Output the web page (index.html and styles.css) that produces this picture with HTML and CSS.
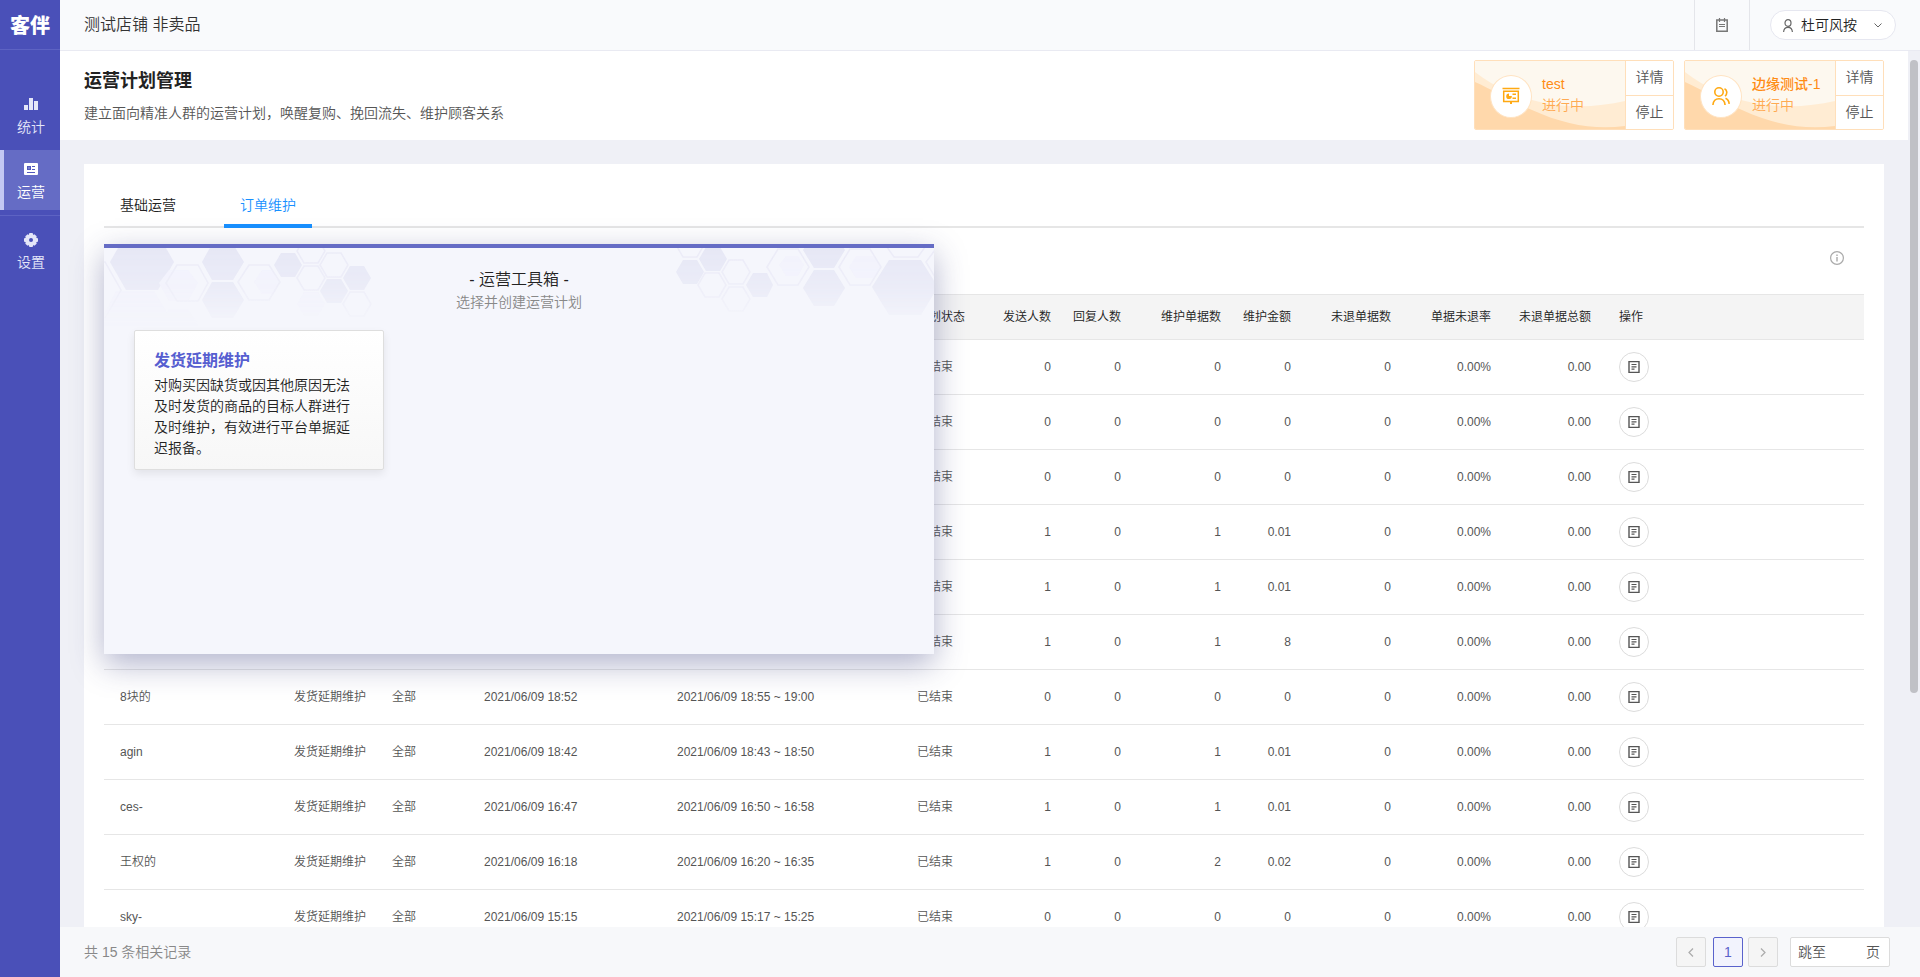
FILE: index.html
```html
<!DOCTYPE html>
<html lang="zh-CN">
<head>
<meta charset="utf-8">
<title>运营计划管理</title>
<link rel="stylesheet" href="styles.css">
</head>
<body>
<svg class="sprite" aria-hidden="true">
  <symbol id="doc" viewBox="0 0 12 12"><path d="M1 .5h10v11H1z" fill="none" stroke="currentColor" stroke-width="1.4"/><path d="M3.5 3.5h5M3.5 5.8h5M3.5 8.2h3" stroke="currentColor" stroke-width="1.2"/></symbol>
  <symbol id="waves" viewBox="0 0 150 68" preserveAspectRatio="none"><path d="M0 11C10 19 22 26 36 32C75 48 115 48 150 40V68H0z" fill="#ffecd3"/><path d="M0 21C18 29 38 41 57 49C90 64 120 69 150 65V68H0z" fill="#ffd8ab"/></symbol>
</svg>
<div class="app">
  <aside class="sidebar">
    <div class="logo">客伴</div>
    <nav class="menu">
      <a class="menu-item" href="#"><svg width="14" height="12" viewBox="0 0 14 12"><path d="M0 7h4v5H0zM5 0h4v12H5zM10 3h4v9h-4z" fill="currentColor"/></svg><span>统计</span></a>
      <a class="menu-item active" href="#"><svg width="14" height="12" viewBox="0 0 14 12"><rect width="14" height="12" rx="1" fill="#fff"/><path d="M3 3h4v4H3zM8 3h3v1H8zM8 6h3v1H8zM3 9h8v1H3z" fill="#5158bd"/><path d="M4.5 4.5h1v1h-1z" fill="#fff"/></svg><span>运营</span></a>
      <a class="menu-item last" href="#"><svg width="14" height="14" viewBox="-7 -7 14 14"><g fill="currentColor"><circle r="5.8"/><rect x="-2" y="-7" width="4" height="14" rx="1"/><rect x="-7" y="-2" width="14" height="4" rx="1"/><rect x="-2" y="-6.6" width="4" height="13.2" rx="1" transform="rotate(45)"/><rect x="-2" y="-6.6" width="4" height="13.2" rx="1" transform="rotate(-45)"/></g><circle r="2" fill="#4a50b8"/></svg><span>设置</span></a>
    </nav>
  </aside>
  <div class="main">
    <header class="topbar">
      <div class="shop">测试店铺 非卖品</div>
      <button class="notes" aria-label="记录"><svg width="12" height="14" viewBox="0 0 12 14"><path d="M.8 2h10.4v11.200H.8z" fill="none" stroke="currentColor" stroke-width="1.500"/><path d="M3.500 0v4M8.500 0v4M3 6.500h6M3 8.500h6" stroke="currentColor" stroke-width="1.200"/></svg></button>
      <div class="account"><button class="user"><svg width="10" height="13" viewBox="0 0 10 13"><g fill="none" stroke="#666" stroke-width="1.2"><ellipse cx="5" cy="4" rx="3" ry="3.3"/><path d="M.6 13c.2-3 1.8-4.6 4.4-4.6S9.200 10 9.400 13"/></g></svg><span>杜可风按</span><svg class="caret" width="8" height="5" viewBox="0 0 8 5"><path d="M.5.5L4 4L7.500.5" fill="none" stroke="#666"/></svg></button></div>
    </header>
    <div class="body">
      <div class="content">
        <section class="page-head">
          <div class="page-title"><h1>运营计划管理</h1><p>建立面向精准人群的运营计划，唤醒复购、挽回流失、维护顾客关系</p></div>
          <div class="plans">
            <article class="plan">
              <div class="plan-info"><svg class="waves"><use href="#waves"/></svg><span class="plan-icon"><svg width="18" height="18" viewBox="0 0 18 18"><g fill="none" stroke="#ffa912" stroke-width="1.5"><path d="M.5 1.500h17"/><path d="M1.700 4.200h14.600v10.300H1.700z"/></g><path d="M8 14.500h2V17H8zM10.500 6.500H14V8h-3.500zM10.500 10.500H14V12h-3.500zM7 6.500v2.500h2.800A2.800 2.800 0 1 1 7 6.500z" fill="#ffa912"/></svg></span><div class="plan-text"><strong>test</strong><span>进行中</span></div></div>
              <div class="plan-actions"><button>详情</button><button>停止</button></div>
            </article>
            <article class="plan">
              <div class="plan-info"><svg class="waves"><use href="#waves"/></svg><span class="plan-icon"><svg width="18" height="18" viewBox="0 0 18 18"><g fill="none" stroke="#ffa912" stroke-width="1.600"><circle cx="7" cy="5" r="4.200"/><path d="M.9 18c.4-4 2.600-6.200 6.100-6.200s5.700 2.200 6.100 6.200M12.500 1.800c2.600 1.200 3.200 4.600.6 7.400M13.500 11.300c2.200.9 3.400 2.800 3.700 5.500"/></g></svg></span><div class="plan-text"><strong>边缘测试-1</strong><span>进行中</span></div></div>
              <div class="plan-actions"><button>详情</button><button>停止</button></div>
            </article>
          </div>
        </section>
        <section class="panel">
          <div class="tabs"><button class="tab">基础运营</button><button class="tab active">订单维护</button></div>
          <div class="tools"><button class="info" aria-label="说明"><svg width="14" height="14" viewBox="0 0 14 14"><circle cx="7" cy="7" r="6.400" fill="none" stroke="#aaa" stroke-width="1.200"/><path d="M7 3.500v1.500M7 6v4.500" stroke="#aaa" stroke-width="1.400"/></svg></button></div>
          <table class="grid">
            <colgroup><col class="c-name"><col class="c-type"><col class="c-scope"><col class="c-date"><col class="c-period"><col class="c-status"><col class="c-send"><col class="c-reply"><col class="c-orders"><col class="c-reply"><col class="c-orders"><col class="c-orders"><col class="c-orders"><col></colgroup>
            <thead><tr><th></th><th></th><th></th><th></th><th></th><th>计划状态</th><th>发送人数</th><th>回复人数</th><th>维护单据数</th><th>维护金额</th><th>未退单据数</th><th>单据未退率</th><th>未退单据总额</th><th>操作</th></tr></thead>
            <tbody>
              <tr><td></td><td></td><td></td><td></td><td></td><td>已结束</td><td>0</td><td>0</td><td>0</td><td>0</td><td>0</td><td>0.00%</td><td>0.00</td><td><button class="op" aria-label="明细"><svg><use href="#doc"/></svg></button></td></tr>
              <tr><td></td><td></td><td></td><td></td><td></td><td>已结束</td><td>0</td><td>0</td><td>0</td><td>0</td><td>0</td><td>0.00%</td><td>0.00</td><td><button class="op" aria-label="明细"><svg><use href="#doc"/></svg></button></td></tr>
              <tr><td></td><td></td><td></td><td></td><td></td><td>已结束</td><td>0</td><td>0</td><td>0</td><td>0</td><td>0</td><td>0.00%</td><td>0.00</td><td><button class="op" aria-label="明细"><svg><use href="#doc"/></svg></button></td></tr>
              <tr><td></td><td></td><td></td><td></td><td></td><td>已结束</td><td>1</td><td>0</td><td>1</td><td>0.01</td><td>0</td><td>0.00%</td><td>0.00</td><td><button class="op" aria-label="明细"><svg><use href="#doc"/></svg></button></td></tr>
              <tr><td></td><td></td><td></td><td></td><td></td><td>已结束</td><td>1</td><td>0</td><td>1</td><td>0.01</td><td>0</td><td>0.00%</td><td>0.00</td><td><button class="op" aria-label="明细"><svg><use href="#doc"/></svg></button></td></tr>
              <tr><td></td><td></td><td></td><td></td><td></td><td>已结束</td><td>1</td><td>0</td><td>1</td><td>8</td><td>0</td><td>0.00%</td><td>0.00</td><td><button class="op" aria-label="明细"><svg><use href="#doc"/></svg></button></td></tr>
              <tr><td>8块的</td><td>发货延期维护</td><td>全部</td><td>2021/06/09 18:52</td><td>2021/06/09 18:55 ~ 19:00</td><td>已结束</td><td>0</td><td>0</td><td>0</td><td>0</td><td>0</td><td>0.00%</td><td>0.00</td><td><button class="op" aria-label="明细"><svg><use href="#doc"/></svg></button></td></tr>
              <tr><td>agin</td><td>发货延期维护</td><td>全部</td><td>2021/06/09 18:42</td><td>2021/06/09 18:43 ~ 18:50</td><td>已结束</td><td>1</td><td>0</td><td>1</td><td>0.01</td><td>0</td><td>0.00%</td><td>0.00</td><td><button class="op" aria-label="明细"><svg><use href="#doc"/></svg></button></td></tr>
              <tr><td>ces-</td><td>发货延期维护</td><td>全部</td><td>2021/06/09 16:47</td><td>2021/06/09 16:50 ~ 16:58</td><td>已结束</td><td>1</td><td>0</td><td>1</td><td>0.01</td><td>0</td><td>0.00%</td><td>0.00</td><td><button class="op" aria-label="明细"><svg><use href="#doc"/></svg></button></td></tr>
              <tr><td>王权的</td><td>发货延期维护</td><td>全部</td><td>2021/06/09 16:18</td><td>2021/06/09 16:20 ~ 16:35</td><td>已结束</td><td>1</td><td>0</td><td>2</td><td>0.02</td><td>0</td><td>0.00%</td><td>0.00</td><td><button class="op" aria-label="明细"><svg><use href="#doc"/></svg></button></td></tr>
              <tr><td>sky-</td><td>发货延期维护</td><td>全部</td><td>2021/06/09 15:15</td><td>2021/06/09 15:17 ~ 15:25</td><td>已结束</td><td>0</td><td>0</td><td>0</td><td>0</td><td>0</td><td>0.00%</td><td>0.00</td><td><button class="op" aria-label="明细"><svg><use href="#doc"/></svg></button></td></tr>
            </tbody>
          </table>
          <div class="toolbox">
            <svg class="hexes" viewBox="0 0 830 80">
              <defs><linearGradient id="fade" gradientUnits="userSpaceOnUse" x1="0" y1="0" x2="0" y2="80"><stop offset="0" stop-color="#fff"/><stop offset=".5" stop-color="#aaa"/><stop offset="1" stop-color="#000"/></linearGradient><mask id="m" maskUnits="userSpaceOnUse" x="0" y="0" width="830" height="80"><rect width="830" height="80" fill="url(#fade)"/></mask></defs>
              <g mask="url(#m)">
                <g fill="#e6e7f5">
                  <path d="M6 14L22-14H54L70 14L54 42H22z"/>
                  <path d="M98 14L108-4H129L140 14L129 32H108zM98 52L108 34H129L140 52L129 70H108z"/>
                  <path d="M170 17L177 5H191L198 17L191 29H177zM239 30L246 18H260L267 30L260 42H246zM216 43L223 31H237L244 43L237 55H223z"/>
                  <path d="M595 11L602-1H616L623 11L616 23H602zM572 24L579 12H593L600 24L593 36H579zM642 37L649 25H663L669 37L663 49H649z"/>
                  <path d="M699 2L710-16H730L741 2L730 20H710zM699 40L710 22H730L741 40L730 58H710zM768 39L785 12H817L834 39L817 67H785z"/>
                </g>
                <g fill="#f2f2fc">
                  <path d="M0 66L12 43H50L64 66L50 90H0zM55 35L65 22H84L94 35L84 53H65zM55 78L65 61H84L95 78L84 95H65zM193 56L200 44H214L221 56L214 68H200zM150 34L158 22H168L176 34L168 46H158zM745 19L752 8H770L778 19L770 30H752zM675 17L682 8H694L700 17L694 28H682z"/>
                </g>
                <g fill="none" stroke="#ebebf7" stroke-width="1.500">
                  <path d="M-30 14H1L17 42L1 70M62 35L73 17H94L104 35L94 53H73zM134 34L145 17H165L176 34L165 52H145z"/>
                  <path d="M193 3L200-9H214L221 3L214 15H200zM216 17L223 5H237L244 17L237 29H223zM193 30L200 18H214L221 30L214 42H200zM239 56L246 44H260L267 56L260 68H246z"/>
                  <path d="M572-3L579-15H593L600-3L593 9H579zM618 24L625 12H639L646 24L639 36H625zM594 37L601 25H615L622 37L615 49H601zM618 51L625 39H639L646 51L639 63H625z"/>
                  <path d="M663 19L674 1H694L705 19L694 37H674zM735 19L746 1H766L777 19L766 37H746zM778-8L790 9H814L826-8M834 -2L822 14L834 34"/>
                </g>
              </g>
            </svg>
            <div class="toolbox-head"><h2>- 运营工具箱 -</h2><p>选择并创建运营计划</p></div>
            <a class="tool-card" href="#"><h3>发货延期维护</h3><p>对购买因缺货或因其他原因无法及时发货的商品的目标人群进行及时维护，有效进行平台单据延迟报备。</p></a>
          </div>
        </section>
      </div>
      <div class="scrollbar"><div class="thumb"></div></div>
    </div>
    <footer class="footer">
      <div class="total">共 15 条相关记录</div>
      <div class="pager">
        <button class="page" aria-label="上一页"><svg width="6" height="9" viewBox="0 0 6 9"><path d="M5 .5L1 4.500L5 8.500" fill="none" stroke="#aaa" stroke-width="1.200"/></svg></button>
        <button class="page current">1</button>
        <button class="page next" aria-label="下一页"><svg width="6" height="9" viewBox="0 0 6 9"><path d="M1 .5L5 4.500L1 8.500" fill="none" stroke="#aaa" stroke-width="1.200"/></svg></button>
        <label class="jump"><span>跳至</span><input type="text"><span>页</span></label>
      </div>
    </footer>
  </div>
</div>
</body>
</html>
```
FILE: styles.css
```css
* { box-sizing: border-box; }
body, h1, h2, h3, p { margin: 0; }
body {
  font: 350 14px/21px "Liberation Sans", "Noto Sans CJK SC", sans-serif;
  color: #222;
}
button, input { font: inherit; color: inherit; margin: 0; padding: 0; border: 0; background: none; }
button { cursor: pointer; }
a { color: inherit; text-decoration: none; }
svg { display: block; flex: none; }
.sprite { position: absolute; width: 0; height: 0; }

.app { display: flex; height: 100vh; overflow: hidden; }
.sidebar { flex: none; width: 60px; background: #4a50b8; color: #e4e6f8; }
.logo {
  display: flex; align-items: center; justify-content: center;
  height: 50px; padding-top: 3px; border-bottom: 1px solid #5d63c3;
  color: #fff; font-size: 20px; font-weight: 900;
}
.menu { padding-top: 40px; }
.menu-item {
  display: flex; flex-direction: column; align-items: center; gap: 7px;
  height: 60px; padding: 8px 0 0 2px;
}
.menu-item.active { padding: 13px 2px 0 0; border-left: 4px solid #c3c8f3; background: #656cc5; color: #fff; }
.menu-item.last { height: 80px; margin-top: 5px; padding-top: 17px; border-top: 1px solid #5d63c3; gap: 5px; }

.main { flex: 1; min-width: 0; display: flex; flex-direction: column; }
.topbar { flex: none; display: flex; height: 51px; background: #f9fafc; border-bottom: 1px solid #e9eaf2; }
.shop { flex: 1; padding-left: 24px; font-size: 16px; line-height: 50px; color: #333; }
.notes { display: flex; align-items: center; justify-content: center; width: 56px; border: solid #e4e5ea; border-width: 0 1px; color: #777; }
.account { display: flex; align-items: center; padding: 0 24px 0 20px; }
.user { display: flex; align-items: center; gap: 8px; width: 126px; height: 30px; padding: 0 13px 0 12px; border: 1px solid #e6e7f0; border-radius: 15px; background: #fff; }
.caret { margin-left: auto; }

.body { flex: 1; min-height: 0; display: flex; background: #eff0f6; }
.content { flex: 1; min-width: 0; overflow: hidden; }
.scrollbar { flex: none; width: 12px; padding: 9px 2px 0; }
.thumb { height: 73%; border-radius: 4px; background: #c0c1c6; }

.page-head { display: flex; justify-content: space-between; padding: 9px 24px 10px; background: #fff; }
.page-title { padding-top: 8px; }
.page-title h1 { font-size: 18px; line-height: 27px; }
.page-title p { margin-top: 8px; color: #555; }
.plans { display: flex; gap: 10px; }
.plan { display: flex; width: 200px; height: 70px; border: 1px solid #ffdfba; border-radius: 2px; overflow: hidden; }
.plan-info { position: relative; flex: 1; display: flex; align-items: center; gap: 10px; padding-left: 15px; background: #fdf8ef; }
.waves { position: absolute; left: 0; top: 0; width: 100%; height: 100%; }
.plan-icon { position: relative; display: flex; align-items: center; justify-content: center; width: 42px; height: 43px; margin-top: 2px; border: 1px solid #ffe3c2; border-radius: 50%; background: #fff; }
.plan-text { position: relative; display: flex; flex-direction: column; color: #ffaa52; white-space: nowrap; }
.plan-text strong { font-weight: 500; color: #ff8c14; }
.plan-actions { display: flex; flex-direction: column; width: 48px; border-left: 1px solid #ffdfba; color: #555; }
.plan-actions button { flex: 1; background: #fff; }
.plan-actions button + button { border-top: 1px solid #ffdfba; }

.panel { position: relative; margin: 24px 24px 0; padding: 20px 20px 0; background: #fff; }
.tabs { display: flex; gap: 32px; height: 44px; border-bottom: 2px solid #e6e6e6; }
.tab { height: 44px; padding: 3px 16px 0; border-bottom: 4px solid transparent; }
.tab.active { border-color: #1890ff; color: #1890ff; }
.tools { display: flex; justify-content: flex-end; align-items: center; height: 66px; padding: 0 20px 6px 0; }

.grid { width: 100%; table-layout: fixed; border-collapse: collapse; font-size: 12px; line-height: 18px; color: #555; }
.grid th, .grid td { padding: 0 10px; text-align: left; font-weight: inherit; white-space: nowrap; border-bottom: 1px solid #e6e6e6; }
.grid th { height: 45px; border-top: 1px solid #e6e6e6; background: #f4f4f4; color: #222; }
.grid td { height: 55px; }
.grid :is(th, td):first-child { padding-left: 16px; }
.grid :is(th, td):nth-child(n+7) { text-align: right; }
.grid :is(th, td):last-child { padding-left: 18px; text-align: left; }
.c-name { width: 180px; }
.c-type { width: 98px; }
.c-scope { width: 92px; }
.c-date { width: 193px; }
.c-period { width: 240px; }
.c-status { width: 76px; }
.c-send { width: 78px; }
.c-reply { width: 70px; }
.c-orders { width: 100px; }
.op { display: flex; align-items: center; justify-content: center; width: 30px; height: 30px; border: 1px solid #dcdcdc; border-radius: 50%; }
.op svg { width: 12px; height: 12px; }

.toolbox {
  position: absolute; left: 20px; top: 80px; width: 830px; height: 410px; padding: 20px 30px;
  border-top: 4px solid #656cc5; background: #f5f6fc;
  box-shadow: 0 10px 30px rgba(50, 55, 120, .38);
}
.hexes { position: absolute; left: 0; top: 0; width: 100%; height: 80px; }
.toolbox-head { position: relative; text-align: center; }
.toolbox-head h2 { font-size: 16px; font-weight: inherit; line-height: 24px; }
.toolbox-head p { color: #888; }
.tool-card { position: relative; display: block; width: 250px; margin-top: 17px; padding: 18px 19px 10px; border: 1px solid #dedede; border-radius: 2px; background: linear-gradient(#fff, #f7f7f7); box-shadow: 0 4px 8px rgba(0, 0, 0, .08); }
.tool-card h3 { margin-bottom: 2px; font-size: 16px; line-height: 24px; color: #565ed0; }
.tool-card p { padding-right: 10px; }

.footer { flex: none; display: flex; align-items: center; justify-content: space-between; height: 50px; padding: 0 30px 0 24px; background: #f7f8fa; color: #888; }
.pager { display: flex; }
.page { display: flex; align-items: center; justify-content: center; width: 30px; height: 30px; border: 1px solid #dcdcdc; border-radius: 2px; background: #f5f5f5; }
.page.current { margin: 0 5px 0 7px; border-color: #5a62cc; background: #f2f3fd; color: #5a62cc; }
.jump { display: flex; align-items: center; width: 100px; height: 30px; margin-left: 12px; padding: 0 9px 0 7px; border: 1px solid #dcdcdc; border-radius: 2px; background: #fff; color: #555; }
.jump input { flex: 1; min-width: 0; outline: 0; }
```
